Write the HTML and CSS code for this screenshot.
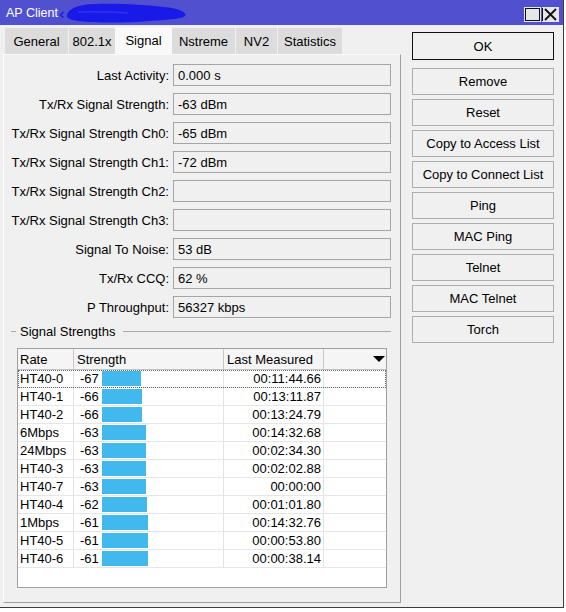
FILE: index.html
```html
<!DOCTYPE html>
<html>
<head>
<meta charset="utf-8">
<link rel="stylesheet" href="styles.css">
</head>
<body>
<div class="window">
  <div class="titlebar">
    <span class="title">AP Client</span>
    <svg class="scribble" width="132" height="25" viewBox="58 0 132 25">
      <path d="M63.5,12 L60.5,15 L63.5,17.5" fill="none" stroke="#1c1ce6" stroke-width="1.6"/>
      <path d="M67,15 C68,9 78,4 95,4 C120,3 150,5 172,8 C182,10 187,13 185,16 C182,19 165,20 150,21 C125,23 95,23 78,21 C70,20 66,18 67,15 Z" fill="#1a1ae8"/>
      <path d="M78,12 C95,11 110,12 128,13" fill="none" stroke="#3030ee" stroke-width="1.5"/>
    </svg>
    <div class="tb-buttons">
      <svg class="tb-btn" width="17" height="15" viewBox="0 0 17 15"><rect x="0" y="0" width="17" height="15" fill="#e6e6e6"/><rect x="1.5" y="1.5" width="14" height="12" fill="none" stroke="#111" stroke-width="1"/></svg>
      <svg class="tb-btn" width="17" height="15" viewBox="0 0 17 15"><rect x="0" y="0" width="17" height="15" fill="#e6e6e6"/><path d="M3,2 L14,13 M14,2 L3,13" stroke="#111" stroke-width="1.8"/><path d="M0.5,1 V14" stroke="#111" stroke-width="1"/></svg>
    </div>
  </div>
  <div class="body">
    <div class="left">
      <div class="tabs">
        <div class="tab w-general">General</div>
        <div class="tab w-8021x">802.1x</div>
        <div class="tab active w-signal">Signal</div>
        <div class="tab w-nstreme">Nstreme</div>
        <div class="tab w-nv2">NV2</div>
        <div class="tab w-stats">Statistics</div>
      </div>
      <div class="panel">
        <div class="form">
          <div class="label">Last Activity:</div><div class="value">0.000 s</div>
          <div class="label">Tx/Rx Signal Strength:</div><div class="value">-63 dBm</div>
          <div class="label">Tx/Rx Signal Strength Ch0:</div><div class="value">-65 dBm</div>
          <div class="label">Tx/Rx Signal Strength Ch1:</div><div class="value">-72 dBm</div>
          <div class="label">Tx/Rx Signal Strength Ch2:</div><div class="value"></div>
          <div class="label">Tx/Rx Signal Strength Ch3:</div><div class="value"></div>
          <div class="label">Signal To Noise:</div><div class="value">53 dB</div>
          <div class="label">Tx/Rx CCQ:</div><div class="value">62 %</div>
          <div class="label">P Throughput:</div><div class="value">56327 kbps</div>
        </div>
        <div class="group-title">
          <span class="gline short"></span><span class="gtext">Signal Strengths</span><span class="gline long"></span>
        </div>
        <div class="table">
          <div class="thead">
            <div class="th">Rate</div>
            <div class="th">Strength</div>
            <div class="th">Last Measured</div>
            <div class="th last"><svg width="12" height="6" viewBox="0 0 12 6"><path d="M0,0 H12 L6,6 Z" fill="#000"/></svg></div>
          </div>
          <div class="row focus"><div class="td">HT40-0</div><div class="td str"><span class="num">-67</span><span class="bar" style="width:39px"></span></div><div class="td time">00:11:44.66</div><div class="td end"></div></div>
          <div class="row"><div class="td">HT40-1</div><div class="td str"><span class="num">-66</span><span class="bar" style="width:40px"></span></div><div class="td time">00:13:11.87</div><div class="td end"></div></div>
          <div class="row"><div class="td">HT40-2</div><div class="td str"><span class="num">-66</span><span class="bar" style="width:40px"></span></div><div class="td time">00:13:24.79</div><div class="td end"></div></div>
          <div class="row"><div class="td">6Mbps</div><div class="td str"><span class="num">-63</span><span class="bar" style="width:44px"></span></div><div class="td time">00:14:32.68</div><div class="td end"></div></div>
          <div class="row"><div class="td">24Mbps</div><div class="td str"><span class="num">-63</span><span class="bar" style="width:44px"></span></div><div class="td time">00:02:34.30</div><div class="td end"></div></div>
          <div class="row"><div class="td">HT40-3</div><div class="td str"><span class="num">-63</span><span class="bar" style="width:44px"></span></div><div class="td time">00:02:02.88</div><div class="td end"></div></div>
          <div class="row"><div class="td">HT40-7</div><div class="td str"><span class="num">-63</span><span class="bar" style="width:44px"></span></div><div class="td time">00:00:00</div><div class="td end"></div></div>
          <div class="row"><div class="td">HT40-4</div><div class="td str"><span class="num">-62</span><span class="bar" style="width:45px"></span></div><div class="td time">00:01:01.80</div><div class="td end"></div></div>
          <div class="row"><div class="td">1Mbps</div><div class="td str"><span class="num">-61</span><span class="bar" style="width:46px"></span></div><div class="td time">00:14:32.76</div><div class="td end"></div></div>
          <div class="row"><div class="td">HT40-5</div><div class="td str"><span class="num">-61</span><span class="bar" style="width:46px"></span></div><div class="td time">00:00:53.80</div><div class="td end"></div></div>
          <div class="row"><div class="td">HT40-6</div><div class="td str"><span class="num">-61</span><span class="bar" style="width:46px"></span></div><div class="td time">00:00:38.14</div><div class="td end"></div></div>
        </div>
      </div>
    </div>
    <div class="buttons">
      <div class="btn ok">OK</div>
      <div class="btn">Remove</div>
      <div class="btn">Reset</div>
      <div class="btn">Copy to Access List</div>
      <div class="btn">Copy to Connect List</div>
      <div class="btn">Ping</div>
      <div class="btn">MAC Ping</div>
      <div class="btn">Telnet</div>
      <div class="btn">MAC Telnet</div>
      <div class="btn">Torch</div>
    </div>
  </div>
</div>
</body>
</html>
```
FILE: styles.css
```css
* { box-sizing: border-box; }
body {
  margin: 0;
  background: #fff;
  font-family: "Liberation Sans", Arial, sans-serif;
  font-size: 13px;
  color: #000;
}
.window {
  width: 564px;
  height: 608px;
  background: #f0f0f0;
  border-right: 1px solid #3c3c3c;
  border-bottom: 1px solid #3c3c3c;
  display: flex;
  flex-direction: column;
}
.titlebar {
  flex: none;
  height: 25px;
  background: #5151cf;
  display: flex;
  align-items: center;
}
.title {
  color: #fff;
  font-size: 12.5px;
  width: 52px;
  margin-left: 6px;
  white-space: nowrap;
}
.scribble { display: block; flex: none; }
.tb-buttons {
  margin-left: auto;
  margin-right: 4px;
  display: flex;
  gap: 1px;
  margin-top: 3px;
}
.tb-btn { display: block; }
.body {
  flex: 1;
  display: flex;
}
.left {
  margin-left: 3px;
  width: 398px;
  display: flex;
  flex-direction: column;
}
.tabs {
  display: flex;
  gap: 1px;
  padding-left: 2px;
  margin-top: 2px;
  height: 27px;
  align-items: flex-end;
}
.tab {
  height: 26px;
  background: #dcdcdc;
  display: flex;
  align-items: center;
  justify-content: center;
  white-space: nowrap;
}
.tab.active {
  height: 28px;
  background: #f9f9f9;
  margin: 0 -1px -1px -1px;
  position: relative;
  z-index: 1;
  padding-bottom: 2px;
}
.w-general { width: 63px; }
.w-8021x { width: 46px; }
.w-signal { width: 57px; }
.w-nstreme { width: 63px; }
.w-nv2 { width: 41px; }
.w-stats { width: 64px; }
.panel {
  height: 549px;
  border: 1px solid;
  border-color: #fbfbfb #a0a0a0 #a0a0a0 #fbfbfb;
  padding-top: 9px;
}
.form {
  display: grid;
  grid-template-columns: 165px 218px;
  column-gap: 4px;
  row-gap: 7px;
  grid-auto-rows: 22px;
}
.label {
  text-align: right;
  align-self: center;
  white-space: nowrap;
}
.value {
  border: 1px solid #a5a5a5;
  padding-left: 4px;
  display: flex;
  align-items: center;
}
.group-title {
  display: flex;
  align-items: center;
  margin: 6px 0 0 7px;
  width: 380px;
  height: 14px;
}
.gline { height: 1px; background: #a8a8a8; }
.gline.short { width: 5px; }
.gline.long { flex: 1; margin-left: 4px; }
.gtext { padding: 0 4px; white-space: nowrap; }
.table {
  margin: 10px 0 0 13px;
  width: 370px;
  height: 240px;
  border: 1px solid #a0a0a0;
  background: #fff;
}
.thead, .row {
  display: grid;
  grid-template-columns: 56px 150px 100px 1fr;
}
.thead {
  height: 21px;
  background: #f5f5f5;
  border-bottom: 1px solid #c4c4c4;
}
.th {
  border-right: 1px solid #c8c8c8;
  padding-left: 3px;
  display: flex;
  align-items: center;
  white-space: nowrap;
}
.th:first-child { padding-left: 2px; }
.th.last {
  border-right: none;
  justify-content: flex-end;
  padding-right: 1px;
}
.row {
  height: 18px;
  border-bottom: 1px solid #e6e6e6;
}
.row.focus {
  outline: 1px dotted #6a6a6a;
  outline-offset: -1px;
}
.td {
  border-right: 1px solid #e3e3e3;
  padding-left: 2px;
  display: flex;
  align-items: center;
  white-space: nowrap;
}
.td.end { border-right: none; }
.td.str { padding-left: 6px; }
.num { width: 22px; flex: none; }
.bar {
  height: 15px;
  background: #41b8ee;
  flex: none;
}
.td.time {
  justify-content: flex-end;
  padding-right: 2px;
}
.buttons {
  margin-left: 11px;
  padding-top: 7px;
  width: 142px;
  display: flex;
  flex-direction: column;
  gap: 4px;
}
.btn {
  height: 27px;
  border: 1px solid #adadad;
  background: #f0f0f0;
  display: flex;
  align-items: center;
  justify-content: center;
  white-space: nowrap;
}
.btn.ok {
  height: 28px;
  border-color: #111;
  margin-bottom: 4px;
}
```
